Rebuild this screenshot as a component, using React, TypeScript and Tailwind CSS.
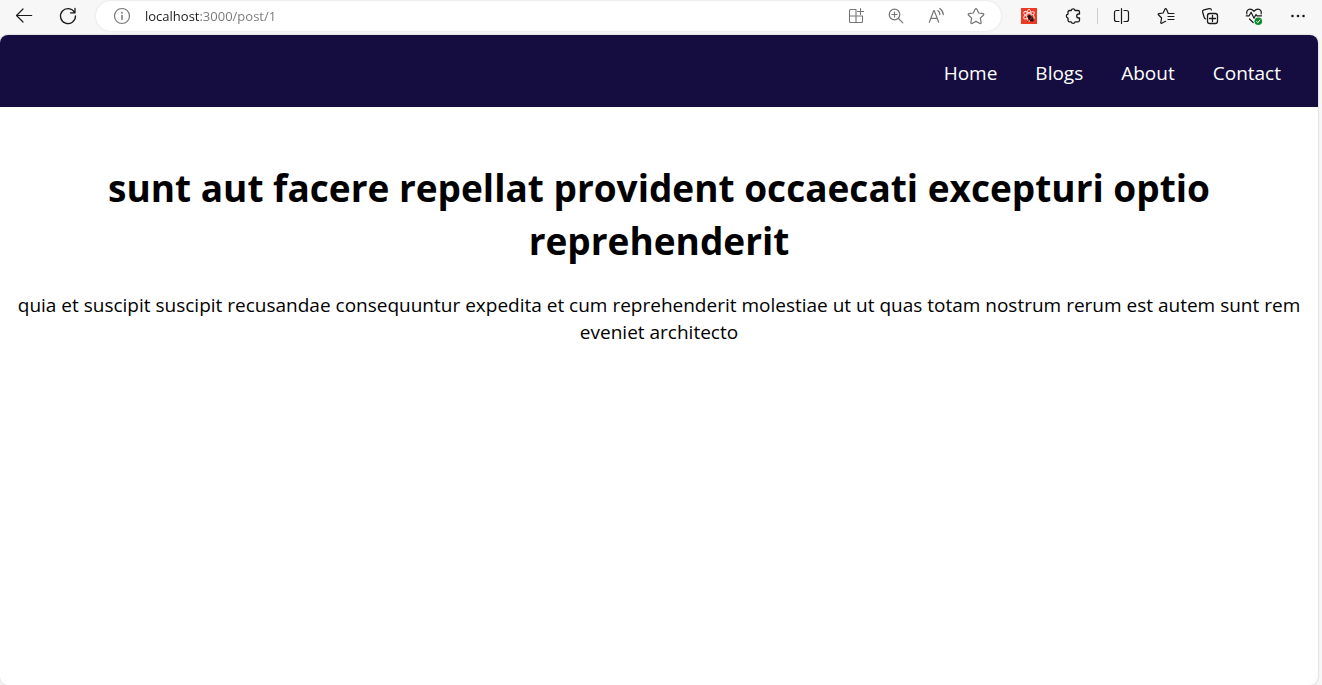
import type { ReactNode } from "react";

function Icon({ children, width = 1.2 }: { children: ReactNode; width?: number }) {
  return (
    <svg
      viewBox="0 0 20 20"
      className="size-5 shrink-0"
      fill="none"
      stroke="currentColor"
      strokeWidth={width}
      strokeLinecap="round"
      strokeLinejoin="round"
      aria-hidden="true"
    >
      {children}
    </svg>
  );
}

function ToolButton({ label, children }: { label: string; children: ReactNode }) {
  return (
    <button type="button" aria-label={label} className="flex h-8 w-11 shrink-0 items-center justify-center text-[#1b1b1b]">
      {children}
    </button>
  );
}

function FieldButton({ label, children }: { label: string; children: ReactNode }) {
  return (
    <button type="button" aria-label={label} className="flex h-7 w-10 shrink-0 items-center justify-center text-[#767676]">
      {children}
    </button>
  );
}

function AddressBar() {
  return (
    <form
      role="search"
      onSubmit={(event) => event.preventDefault()}
      className="mx-1.5 flex h-[30px] min-w-0 flex-1 items-center rounded-full bg-white pr-[5px] pl-1.5 shadow-[0_0_3px_rgba(0,0,0,0.1)]"
    >
      <FieldButton label="View site information">
        <Icon>
          <circle cx="10" cy="10" r="7.5" />
          <path d="M10 9.5v4" strokeWidth="1.5" />
          <path d="M10 6.7v.1" strokeWidth="1.8" />
        </Icon>
      </FieldButton>
      <input
        type="text"
        aria-label="Address"
        defaultValue="localhost:3000/post/1"
        className="ml-[3px] h-6 min-w-0 flex-1 bg-[linear-gradient(to_right,#1b1b1b_54px,#767676_54px)] bg-clip-text font-['Open_Sans','Noto_Sans',sans-serif] text-[13px] text-transparent caret-black outline-none"
      />
      <FieldButton label="App available">
        <Icon width={1.1}>
          <path d="M10 3.5H4.5a1 1 0 0 0-1 1v11a1 1 0 0 0 1 1h11a1 1 0 0 0 1-1V10H3.5M10 3.5v13M14.5 2.5v6M11.5 5.5h6" />
        </Icon>
      </FieldButton>
      <FieldButton label="Zoom">
        <Icon>
          <circle cx="8.5" cy="8.5" r="5.3" />
          <path d="M12.5 12.5l4.3 4.3M8.5 6v5M6 8.5h5" />
        </Icon>
      </FieldButton>
      <FieldButton label="Read aloud">
        <Icon>
          <path d="M3.3 16.3L7.8 4.5h.4l4.5 11.8M5 12.3h6M11.8 4.6c1.3.9 2 2.3 2.1 4M13.8 2.5c2.1 1.4 3.3 3.5 3.5 6.1" />
        </Icon>
      </FieldButton>
      <FieldButton label="Add this page to favorites">
        <Icon>
          <path d="M9.3 2.9a.8.8 0 0 1 1.4 0l2 4.1 4.5.7a.8.8 0 0 1 .4 1.3l-3.2 3.2.7 4.5a.8.8 0 0 1-1.1.8L10 15.4l-4 2.1a.8.8 0 0 1-1.1-.8l.7-4.5L2.4 9a.8.8 0 0 1 .4-1.3L7.3 7z" />
        </Icon>
      </FieldButton>
    </form>
  );
}

function BrowserToolbar() {
  return (
    <div className="flex h-[35px] shrink-0 items-start bg-[#f7f7f7] px-0.5">
      <div className="flex min-w-0 flex-1 items-center">
        <ToolButton label="Back">
          <Icon>
            <path d="M17.7 9.5H2.5M9 3L2.5 9.5 9 16" />
          </Icon>
        </ToolButton>
        <ToolButton label="Refresh">
          <Icon width={1.3}>
            <path d="M17.5 10a7.5 7.5 0 1 1-1-3.7M17 2.5v4.4h-4.5" />
          </Icon>
        </ToolButton>
        <AddressBar />
        <ToolButton label="React extension">
          <svg viewBox="0 0 20 20" className="size-5" aria-hidden="true">
            <path d="M2 2h16v16H2z" fill="#ee3a24" />
            <g fill="none" stroke="#fff" strokeWidth="0.9" opacity="0.9">
              <ellipse cx="10" cy="9.3" rx="2.2" ry="6" />
              <ellipse cx="10" cy="9.3" rx="2.2" ry="6" transform="rotate(60 10 9.3)" />
              <ellipse cx="10" cy="9.3" rx="2.2" ry="6" transform="rotate(-60 10 9.3)" />
            </g>
            <ellipse cx="11.7" cy="12.3" rx="2.2" ry="3.8" fill="#2b1614" transform="rotate(-40 11.7 12.3)" />
            <path d="M8.800 9.800L8 11M12.500 9l1.500 1.200M9.500 14.500l-.8 1.200" stroke="#2b1614" strokeWidth="0.800" />
            <path d="M10.800 13.500l2.700-2.300" stroke="#ee3a24" strokeWidth=".7" />
          </svg>
        </ToolButton>
        <ToolButton label="Extensions">
          <Icon width={1.3}>
            <path d="M6.500 4.500h1.700a2 2 0 0 1 3.900 0h2.900a1.500 1.500 0 0 1 1.500 1.500v2h-.8a2 2 0 0 0 0 4h.8v2.300a1.500 1.500 0 0 1-1.500 1.500h-2.900a2 2 0 0 1-3.900 0H6.500A1.500 1.500 0 0 1 5 14.300v-2.200a2.100 2.100 0 0 1 0-4.100V6a1.500 1.500 0 0 1 1.500-1.500z" />
          </Icon>
        </ToolButton>
        <span className="mx-0.5 h-4 w-px shrink-0 bg-[#cfcfcf]" />
        <ToolButton label="Split screen">
          <Icon width={1.2}>
            <path d="M7 4.500H4.500a2 2 0 0 0-2 2v7a2 2 0 0 0 2 2H7M12 4.500h2.500a2 2 0 0 1 2 2v7a2 2 0 0 1-2 2H12M9.500 2.500v15" />
          </Icon>
        </ToolButton>
        <ToolButton label="Favorites">
          <Icon>
            <path d="M16 7.500h-3.700L10.400 3.100a.8.8 0 0 0-1.400 0L7.200 7l-4.400.6a.7.7 0 0 0-.4 1.200l3.200 3.200-.8 4.500a.7.7 0 0 0 1 .8l3.700-2M12 7.500h6M12 10.500h6M12 13.500h6" />
          </Icon>
        </ToolButton>
        <ToolButton label="Collections">
          <Icon width={1.3}>
            <path d="M5.500 12.900a1.800 1.800 0 0 1-1.300-1.500L2.600 6a1.800 1.800 0 0 1 1.300-2.100l5.300-1.300a1.800 1.800 0 0 1 2.200 1.300" />
            <rect x="7.500" y="7.500" width="10" height="10" rx="2.200" />
            <path d="M12.500 9.500v6M9.500 12.500h6" />
          </Icon>
        </ToolButton>
        <ToolButton label="Browser essentials">
          <Icon>
            <path d="M2.900 8C2 5.300 3.900 3.200 6 3.200c1.800 0 3 .9 4 2.100 1-1.200 2.200-2.100 4-2.100 2.300 0 4 2.300 3.100 4.800M2.200 9.800h3l1.900-3.600 2.900 6 2-3.700 1 1.300h4.500M5.500 13l3.700 3.500" />
            <circle cx="14.300" cy="15.200" r="3.800" fill="#10892e" stroke="none" />
            <path d="M12.700 15.500l1.100 1.100 2-2.500" stroke="#fff" strokeWidth="1" />
          </Icon>
        </ToolButton>
        <ToolButton label="Settings and more">
          <svg viewBox="0 0 20 20" className="size-5" fill="currentColor" aria-hidden="true">
            <circle cx="4.500" cy="10" r="1.300" />
            <circle cx="10" cy="10" r="1.300" />
            <circle cx="15.500" cy="10" r="1.300" />
          </svg>
        </ToolButton>
      </div>
    </div>
  );
}

const links = ["Home", "Blogs", "About", "Contact"];

export default function App() {
  return (
    <div className="flex min-h-screen flex-col bg-[#f7f7f7] font-['Open_Sans','Noto_Sans',sans-serif] text-black">
      <BrowserToolbar />
      <div className="mr-1 flex flex-1 flex-col overflow-hidden rounded-lg bg-white shadow-[0_0_2px_rgba(0,0,0,0.25)]">
        <header className="flex h-[72px] items-center justify-end bg-[#150d40] px-[37px] pt-1">
          <nav className="flex gap-[38px] text-[19px] leading-7 text-white">
            {links.map((name) => (
              <a key={name} href={`#${name.toLowerCase()}`}>
                {name}
              </a>
            ))}
          </nav>
        </header>
        <main className="px-3 pt-[54px] text-center">
          <h1 className="text-[37px] leading-[53px] font-bold">
            sunt aut facere repellat provident occaecati excepturi optio reprehenderit
          </h1>
          <p className="mt-[25px] text-[19px] leading-[27px]">
            quia et suscipit suscipit recusandae consequuntur expedita et cum reprehenderit molestiae ut ut quas totam
            nostrum rerum est autem sunt rem eveniet architecto
          </p>
        </main>
      </div>
    </div>
  );
}
